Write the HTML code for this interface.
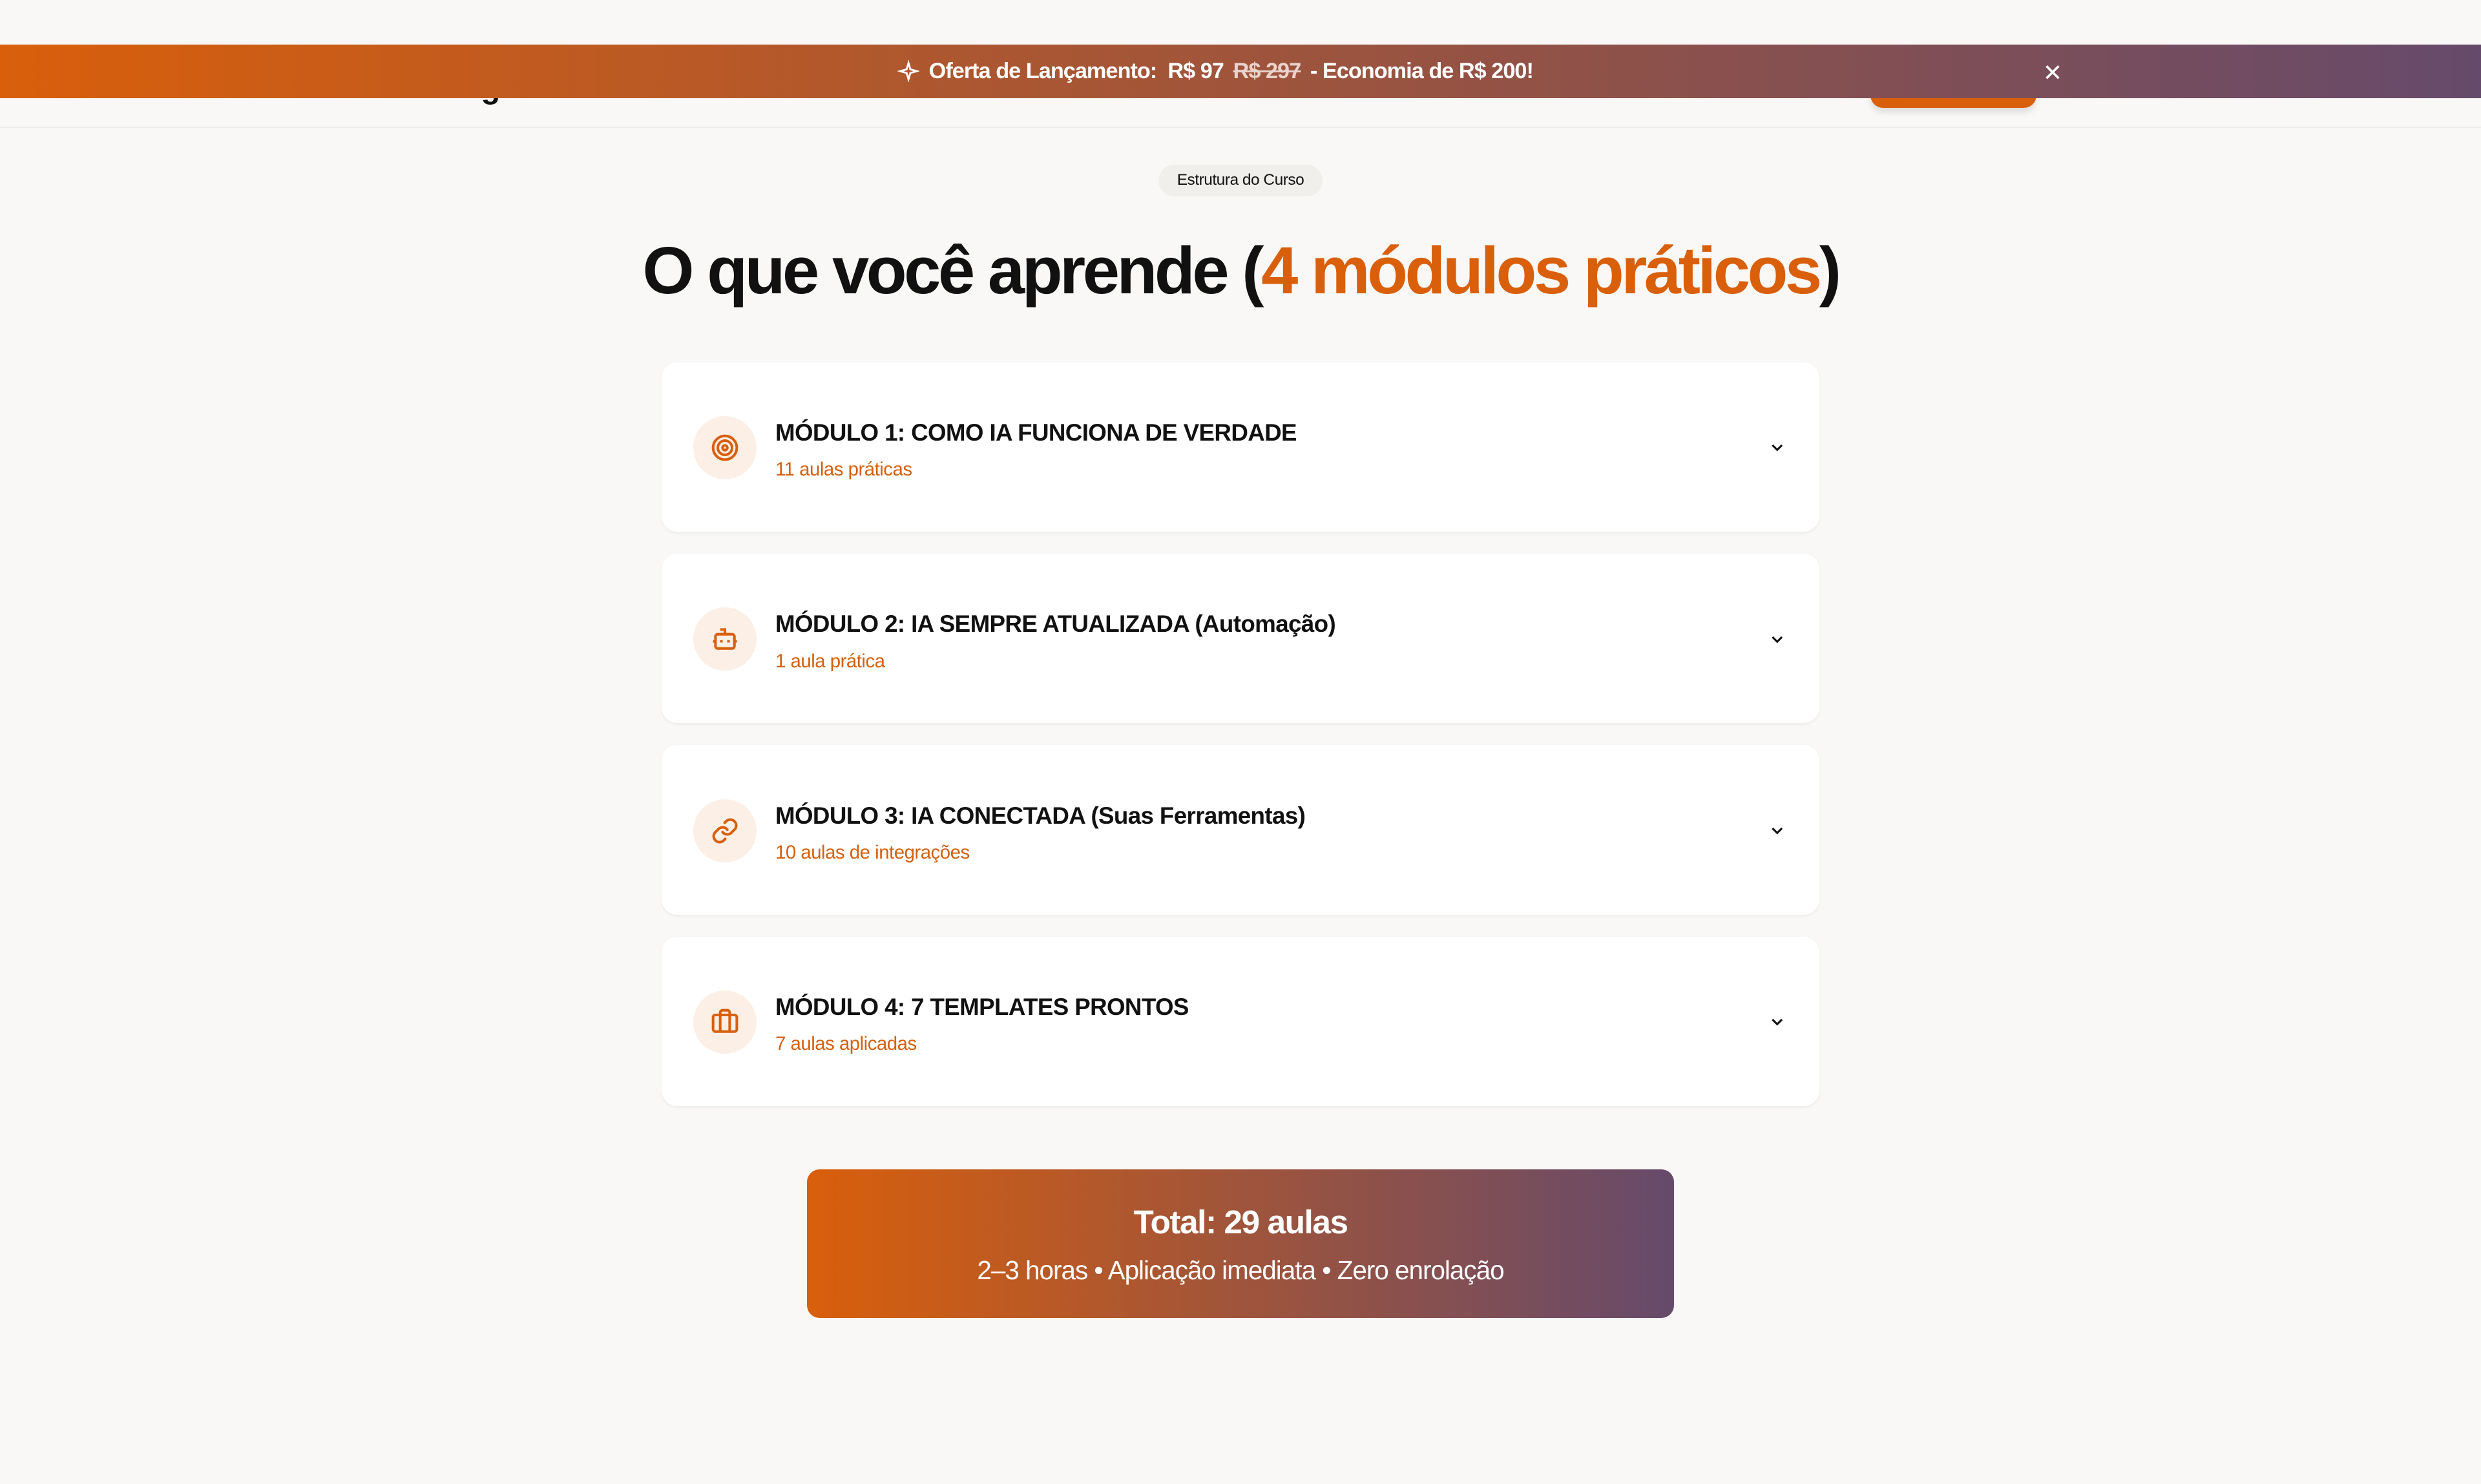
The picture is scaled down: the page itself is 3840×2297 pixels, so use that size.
<!DOCTYPE html>
<html><head><meta charset="utf-8">
<style>
html,body{margin:0;padding:0;background:#f9f8f6;overflow:hidden}
body{width:1568px;height:938px;zoom:2.44898;position:relative;font-family:"Liberation Sans",sans-serif;color:#111}
.abs{position:absolute}
.banner{left:0;top:28px;width:1536px;padding-right:32px;height:34px;background:linear-gradient(90deg,#d95f0b,#664a6b);color:#fff;font-size:14px;font-weight:bold;letter-spacing:-0.4px;display:flex;align-items:center;justify-content:center}
.banner s{color:#e9d3cc;font-weight:bold;margin:0 6px}
.card{left:418px;width:732px;height:107px;background:#fff;border-radius:10px;box-shadow:0 1px 2px rgba(0,0,0,.05)}
.ic{position:absolute;left:20px;top:34px;width:40px;height:40px;border-radius:50%;background:#fcefe6;display:flex;align-items:center;justify-content:center}
.t{position:absolute;left:72px;top:36px;font-size:15px;font-weight:bold;letter-spacing:-0.25px;white-space:nowrap}
.s{position:absolute;left:72px;top:61px;font-size:12px;color:#d4600e;letter-spacing:-0.2px}
.ch{position:absolute;left:699px;top:48px}
</style></head><body>
<div class="abs" style="left:0;top:80px;width:1568px;height:1px;background:#efedea"></div>
<div class="abs" style="left:1182px;top:50px;width:105px;height:18px;background:#d95f0b;border-radius:0 0 8px 8px;box-shadow:0 3px 4px rgba(0,0,0,.1)"></div>
<div class="abs" style="left:304px;top:44px;font-size:20px;font-weight:bold">g</div>
<div class="abs banner"><svg width="14" height="14" viewBox="0 0 24 24" fill="none" stroke="#fff" stroke-width="2" style="margin-right:6px"><path d="M12 3l2 7 7 2-7 2-2 7-2-7-7-2 7-2z"/></svg>Oferta de Lançamento:&nbsp; R$ 97 <s>R$ 297</s> - Economia de R$ 200!</div>
<div class="abs" style="left:1291px;top:37px;color:#fff;font-size:15px">✕</div>

<div class="abs" style="left:732px;top:104px;width:104px;height:20px;border-radius:10px;background:#f1efec;font-size:10px;display:flex;align-items:center;justify-content:center;letter-spacing:-0.2px">Estrutura do Curso</div>
<div class="abs" style="left:0;top:147px;width:1568px;text-align:center;font-size:42px;font-weight:bold;letter-spacing:-1.8px">O que você aprende (<span style="color:#d95f0b">4 módulos práticos</span>)</div>

<div class="abs card" style="top:229px"><div class="ic"><svg width="18" height="18" viewBox="0 0 24 24" fill="none" stroke="#d95f0b" stroke-width="2.2"><circle cx="12" cy="12" r="10"/><circle cx="12" cy="12" r="6"/><circle cx="12" cy="12" r="2"/></svg></div><div class="t">MÓDULO 1: COMO IA FUNCIONA DE VERDADE</div><div class="s">11 aulas práticas</div><svg class="ch" width="12" height="12" viewBox="0 0 24 24" fill="none" stroke="#111" stroke-width="2.5"><path d="M6 9l6 6 6-6"/></svg></div>
<div class="abs card" style="top:350px"><div class="ic"><svg width="18" height="18" viewBox="0 0 24 24" fill="none" stroke="#d95f0b" stroke-width="2.2"><path d="M12 8V4H8"/><rect x="4" y="8" width="16" height="12" rx="2"/><path d="M2 14h2M20 14h2M15 13v2M9 13v2"/></svg></div><div class="t">MÓDULO 2: IA SEMPRE ATUALIZADA (Automação)</div><div class="s">1 aula prática</div><svg class="ch" width="12" height="12" viewBox="0 0 24 24" fill="none" stroke="#111" stroke-width="2.5"><path d="M6 9l6 6 6-6"/></svg></div>
<div class="abs card" style="top:471px"><div class="ic"><svg width="18" height="18" viewBox="0 0 24 24" fill="none" stroke="#d95f0b" stroke-width="2.2" stroke-linecap="round"><path d="M10 13a5 5 0 0 0 7.5.5l3-3a5 5 0 0 0-7-7l-1.7 1.7"/><path d="M14 11a5 5 0 0 0-7.5-.5l-3 3a5 5 0 0 0 7 7l1.7-1.7"/></svg></div><div class="t">MÓDULO 3: IA CONECTADA (Suas Ferramentas)</div><div class="s">10 aulas de integrações</div><svg class="ch" width="12" height="12" viewBox="0 0 24 24" fill="none" stroke="#111" stroke-width="2.5"><path d="M6 9l6 6 6-6"/></svg></div>
<div class="abs card" style="top:592px"><div class="ic"><svg width="18" height="18" viewBox="0 0 24 24" fill="none" stroke="#d95f0b" stroke-width="2.2"><path d="M16 20V4a2 2 0 0 0-2-2h-4a2 2 0 0 0-2 2v16"/><rect x="2" y="6" width="20" height="14" rx="2"/></svg></div><div class="t">MÓDULO 4: 7 TEMPLATES PRONTOS</div><div class="s">7 aulas aplicadas</div><svg class="ch" width="12" height="12" viewBox="0 0 24 24" fill="none" stroke="#111" stroke-width="2.5"><path d="M6 9l6 6 6-6"/></svg></div>

<div class="abs" style="left:510px;top:739px;width:548px;height:94px;border-radius:8px;background:linear-gradient(90deg,#d95f0b,#664a6b);color:#fff;text-align:center">
<div style="margin-top:21px;font-size:21px;font-weight:bold;letter-spacing:-0.6px">Total: 29 aulas</div>
<div style="margin-top:9px;font-size:16.5px;letter-spacing:-0.4px">2–3 horas • Aplicação imediata • Zero enrolação</div>
</div>
</body></html>
